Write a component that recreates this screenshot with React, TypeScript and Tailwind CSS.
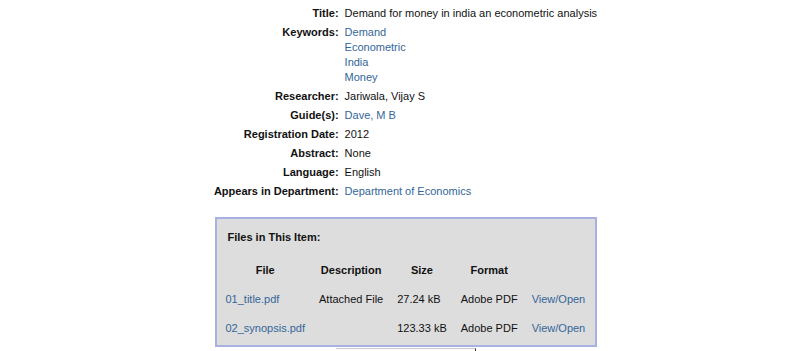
import React from "react";

const link = "text-[#336699]";

const rows: { label: string; values: string[]; isLink?: boolean }[] = [
  { label: "Title:", values: ["Demand for money in india an econometric analysis"] },
  { label: "Keywords:", values: ["Demand", "Econometric", "India", "Money"], isLink: true },
  { label: "Researcher:", values: ["Jariwala, Vijay S"] },
  { label: "Guide(s):", values: ["Dave, M B"], isLink: true },
  { label: "Registration Date:", values: ["2012"] },
  { label: "Abstract:", values: ["None"] },
  { label: "Language:", values: ["English"] },
  { label: "Appears in Department:", values: ["Department of Economics"], isLink: true },
];

export default function App() {
  return (
    <div
      className="w-[811px] h-[351px] overflow-hidden bg-white text-[11px] leading-[15px] text-[#111]"
      style={{ fontFamily: '"Liberation Sans", Arial, sans-serif' }}
    >
      <div className="flex flex-col items-center pt-[4px]">
        <table className="border-collapse">
          <tbody>
            {rows.map((r) => (
              <tr key={r.label}>
                <td className="align-top text-right font-bold whitespace-nowrap py-[2px] pr-[3px]">{r.label}</td>
                <td className="align-top py-[2px] pl-[3px] whitespace-nowrap">
                  {r.values.map((v) => (
                    <div key={v} className={r.isLink ? link : ""}>
                      {v}
                    </div>
                  ))}
                </td>
              </tr>
            ))}
          </tbody>
        </table>

        <div className="mt-[16px] w-[382px] border-2 border-[#a9b1e2] bg-[#dddddd] pt-[11px] pb-[2px]">
          <div className="pl-[11px] font-bold">Files in This Item:</div>
          <table className="mt-[11px] ml-[2px] border-collapse">
            <thead>
              <tr>
                <th className="px-[7px] py-[7px] text-center font-bold">File</th>
                <th className="px-[7px] py-[7px] text-center font-bold">Description</th>
                <th className="px-[7px] py-[7px] text-center font-bold">Size</th>
                <th className="px-[7px] py-[7px] text-center font-bold">Format</th>
                <th className="px-[7px] py-[7px]"></th>
              </tr>
            </thead>
            <tbody>
              <tr>
                <td className={`px-[7px] py-[7px] whitespace-nowrap ${link}`}>01_title.pdf</td>
                <td className="px-[7px] py-[7px] whitespace-nowrap">Attached File</td>
                <td className="px-[7px] py-[7px] whitespace-nowrap">27.24 kB</td>
                <td className="px-[7px] py-[7px] whitespace-nowrap">Adobe PDF</td>
                <td className={`px-[7px] py-[7px] whitespace-nowrap ${link}`}>View/Open</td>
              </tr>
              <tr>
                <td className={`px-[7px] py-[7px] whitespace-nowrap ${link}`}>02_synopsis.pdf</td>
                <td className="px-[7px] py-[7px] whitespace-nowrap"></td>
                <td className="px-[7px] py-[7px] whitespace-nowrap">123.33 kB</td>
                <td className="px-[7px] py-[7px] whitespace-nowrap">Adobe PDF</td>
                <td className={`px-[7px] py-[7px] whitespace-nowrap ${link}`}>View/Open</td>
              </tr>
            </tbody>
          </table>
        </div>

        <div className="mt-[1px] w-[140px] h-[20px] border-t border-t-[#c8c8c8] border-r border-r-[#333] bg-white"></div>
      </div>
    </div>
  );
}
